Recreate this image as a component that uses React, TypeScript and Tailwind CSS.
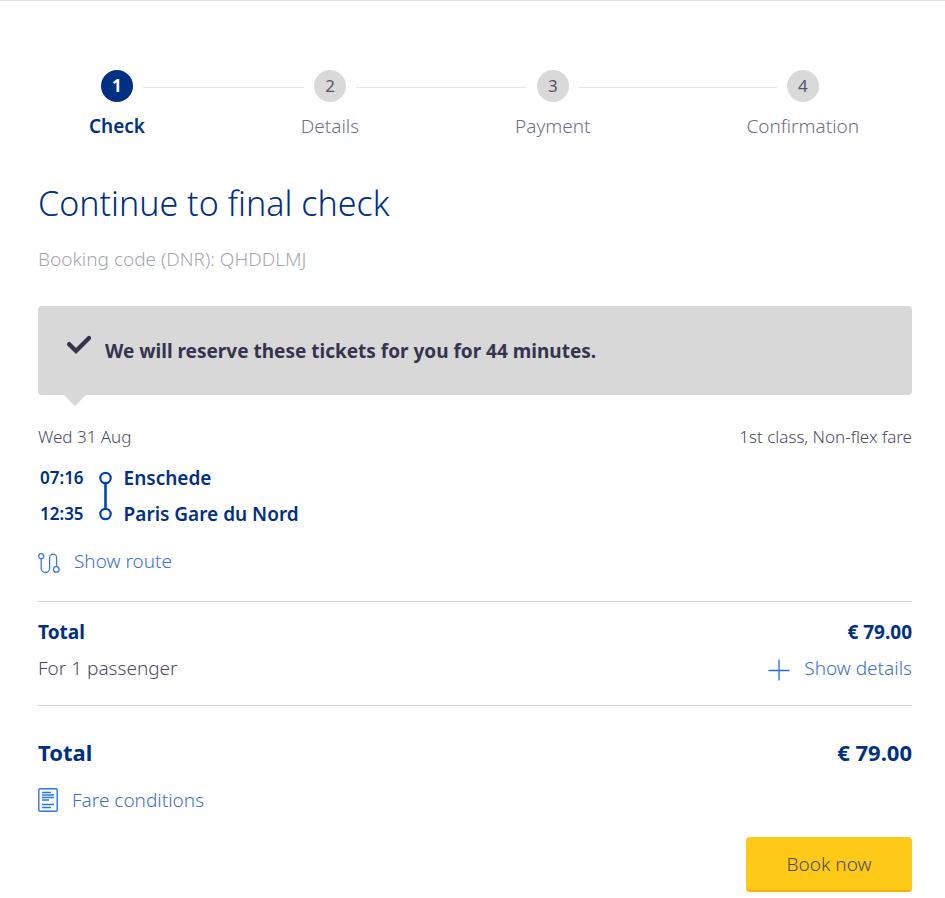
import React from "react";

const steps = ["Check", "Details", "Payment", "Confirmation"];

function Stepper({ current }: { current: number }) {
  return (
    <ol className="mr-2 ml-[11px] flex">
      {steps.map((label, i) => {
        const active = i === current;
        return (
          <li key={label} className="flex flex-auto flex-col items-center" aria-current={active ? "step" : undefined}>
            <div className="flex h-8 w-full items-center">
              <span className={i === 0 ? "flex-1" : "mt-[3px] h-px flex-1 bg-[#e6e6e6]"} />
              <span
                className={
                  active
                    ? "mx-[10px] flex size-8 items-center justify-center rounded-full bg-[#003082] text-[17px] font-bold text-white"
                    : "mx-[10px] flex size-8 items-center justify-center rounded-full bg-[#d9d9d9] text-[17px] text-[#53536b]"
                }
              >
                {i + 1}
              </span>
              <span className={i === steps.length - 1 ? "flex-1" : "mt-[3px] h-px flex-1 bg-[#e6e6e6]"} />
            </div>
            <span
              className={
                active
                  ? "mt-3 px-[77px] leading-6 font-semibold text-[#003082]"
                  : "mt-3 px-[77px] leading-6 font-light text-[#6f6f84]"
              }
            >
              {label}
            </span>
          </li>
        );
      })}
    </ol>
  );
}

function CheckIcon() {
  return (
    <svg className="h-6 w-6 shrink-0" viewBox="0 0 24 24" fill="none" stroke="#34344e" strokeWidth="4.4" aria-hidden="true">
      <path d="M2.2 10.2 9 17 22 4" strokeLinecap="round" strokeLinejoin="miter" />
    </svg>
  );
}

function JourneyIcon() {
  return (
    <svg className="h-[50px] w-[13px]" viewBox="0 0 13 50" fill="none" stroke="#0044b8" strokeWidth="2.2" aria-hidden="true">
      <circle cx="6.5" cy="7" r="5.2" />
      <path d="M6.5 12v26" strokeWidth="2.6" />
      <circle cx="6.5" cy="43" r="5.2" />
    </svg>
  );
}

function RouteIcon() {
  return (
    <svg className="mt-[3px] size-[22px]" viewBox="0 0 22 22" fill="none" stroke="#3b7bdc" strokeWidth="1.3" aria-hidden="true">
      <circle cx="3.2" cy="4.2" r="2.5" />
      <path d="M3.2 6.7v9.6a4.2 4.2 0 0 0 8.4 0V5.6a3.5 3.5 0 0 1 7 0v9" />
      <circle cx="18.3" cy="17.4" r="2.8" />
    </svg>
  );
}

function PlusIcon() {
  return (
    <svg className="mt-1 size-[22px]" viewBox="0 0 22 22" fill="none" stroke="#1f6fdc" strokeWidth="1.3" aria-hidden="true">
      <path d="M11 .5v21M.5 11.5h21" />
    </svg>
  );
}

function DocumentIcon() {
  return (
    <svg className="h-6 w-5" viewBox="0 0 20 24" fill="none" stroke="#2a78e0" strokeWidth="1.4" aria-hidden="true">
      <rect x=".8" y=".8" width="18.4" height="22.4" rx="1.2" />
      <path d="M4 4.500h9M4 7h12M4 9.500h12M4 12h7M4 16.500h12M4 19.500h9" />
    </svg>
  );
}

export default function App() {
  return (
    <main className="border-t border-[#e0e0e0] bg-white pt-[69px] pb-1.5 font-['Noto_Sans','Open_Sans',sans-serif] text-[19px] leading-6 text-[#4a4a62]">
      <Stepper current={0} />

      <div className="mr-[33px] ml-[38px]">
        <h1 className="mt-[42px] text-[34px] leading-[46px] font-light text-[#003082]">Continue to final check</h1>
        <p className="mt-[21px] font-light text-[#a6a6b2]">Booking code (DNR): QHDDLMJ</p>

        <div className="relative mt-[35px] flex h-[89px] items-center rounded bg-[#d8d8d8] pl-[29px]">
          <div className="mb-[10px]">
            <CheckIcon />
          </div>
          <p className="ml-[14px] font-bold text-[#34344e]">We will reserve these tickets for you for 44 minutes.</p>
          <span className="absolute top-full left-[26px] h-0 w-0 border-x-[11px] border-t-[11px] border-x-transparent border-t-[#d8d8d8]" />
        </div>

        <section>
          <div className="mt-[30px] flex justify-between text-[17px] font-light">
            <span>Wed 31 Aug</span>
            <span>1st class, Non-flex fare</span>
          </div>
          <div className="mt-[17px] flex pl-0.5 font-semibold text-[#003082]">
            <div className="text-[17px]">
              <p>07:16</p>
              <p className="mt-3">12:35</p>
            </div>
            <div className="mr-3 ml-[15px] mt-[5px] -mb-[5px]">
              <JourneyIcon />
            </div>
            <div>
              <p>Enschede</p>
              <p className="mt-3">Paris Gare du Nord</p>
            </div>
          </div>
          <button type="button" className="mt-[23px] flex h-6 items-center gap-[14px] font-light text-[#3b70cf]">
            <RouteIcon />
            Show route
          </button>
        </section>

        <section className="mt-7 border-y border-[#d8d8d8] pt-[18px] pb-[25px]">
          <div className="flex justify-between font-bold text-[#003082]">
            <span>Total</span>
            <span>€ 79.00</span>
          </div>
          <div className="mt-3 flex justify-between font-light">
            <span>For 1 passenger</span>
            <button type="button" className="flex h-6 items-center gap-[14px] text-[#3b70cf]">
              <PlusIcon />
              Show details
            </button>
          </div>
        </section>

        <div className="mt-[34px] flex justify-between text-[22px] font-bold text-[#003082]">
          <span>Total</span>
          <span>€ 79.00</span>
        </div>
        <a href="#fare-conditions" className="mt-6 flex w-fit items-center gap-[14px] font-light text-[#3b70cf]">
          <DocumentIcon />
          Fare conditions
        </a>
        <div className="mt-[25px] flex justify-end">
          <button type="button" className="h-[55px] w-[166px] rounded border-b-2 border-[#ffb000] bg-[#ffc917] font-light text-[#4a4a62]">
            Book now
          </button>
        </div>
      </div>
    </main>
  );
}
